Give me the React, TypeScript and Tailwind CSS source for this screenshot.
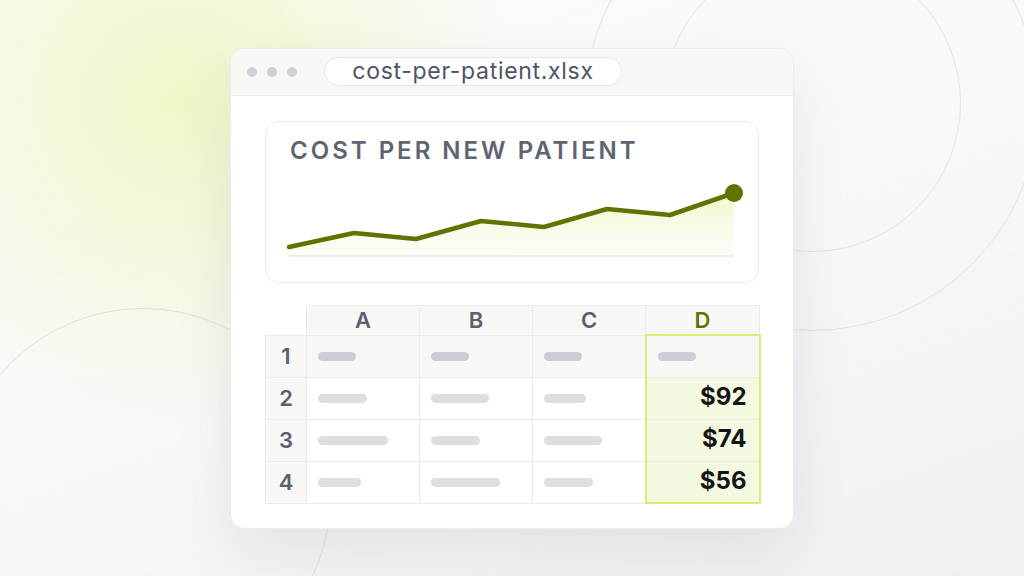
import type { ReactNode } from "react";

const rows = [
  { n: 1, bars: [38, 38, 38, 38], value: "" },
  { n: 2, bars: [49, 58, 42], value: "$92" },
  { n: 3, bars: [70, 49, 58], value: "$74" },
  { n: 4, bars: [43, 69, 49], value: "$56" },
];

const points = "9,70 74,56 136,62 201,44 264,50 327,32 390,38 454,16";

const Bar = ({ width, dark }: { width: number; dark?: boolean }) => (
  <div
    className={`h-[9px] rounded-full ${dark ? "bg-[#cbced5]" : "bg-[#dddee2]"}`}
    style={{ width }}
  />
);

const HeadCell = ({ children, active }: { children: ReactNode; active?: boolean }) => (
  <th
    className={`border border-[#ebebeb] bg-[#f7f7f6] text-center align-middle text-[22px] font-semibold leading-none ${
      active ? "text-[#5f7400]" : "text-[#5b606e]"
    }`}
  >
    {children}
  </th>
);

const Chart = () => (
  <svg width="470" height="90" viewBox="0 0 470 90" className="block">
    <defs>
      <linearGradient id="fill" x1="0" y1="0" x2="0" y2="1">
        <stop offset="0" stopColor="#eef7c4" stopOpacity="0.9" />
        <stop offset="1" stopColor="#f6fae4" stopOpacity="0.3" />
      </linearGradient>
    </defs>
    <polygon points={`9,79 ${points} 454,79`} fill="url(#fill)" />
    <line x1="9" y1="79" x2="454" y2="79" stroke="#e6e6e6" strokeWidth="1.5" />
    <polyline
      points={points}
      fill="none"
      stroke="#5f7400"
      strokeWidth="4.5"
      strokeLinejoin="round"
      strokeLinecap="round"
    />
    <circle cx="454" cy="16" r="9" fill="#5f7400" />
  </svg>
);

export default function App() {
  return (
    <div className="relative flex h-[576px] w-[1024px] items-center justify-center overflow-hidden bg-[#f7f7f8] bg-[radial-gradient(circle_at_180px_100px,#eff7c8_0px,rgba(242,248,214,0.75)_150px,rgba(250,250,250,0)_340px),linear-gradient(160deg,#fbfbfb_0%,#f8f8f9_50%,#eef0f3_100%)] font-['Inter',sans-serif]">
      <div className="absolute left-[585px] top-[-123px] h-[454px] w-[454px] rounded-full border border-[#e3e3e3]" />
      <div className="absolute left-[663px] top-[-46px] h-[298px] w-[298px] rounded-full border border-[#e3e3e3]" />
      <div className="absolute left-[-45px] top-[308px] h-[376px] w-[376px] rounded-full border border-[#e0e0dc]" />

      <div className="relative h-[481px] w-[564px] overflow-hidden rounded-[14px] border border-[#ececec] bg-white shadow-[0_24px_60px_rgba(20,20,40,0.08)]">
        <div className="flex h-[47px] items-center border-b border-[#ebebea] bg-[#f7f7f5] pl-[16px]">
          <div className="flex gap-[10px]">
            <span className="h-[10px] w-[10px] rounded-full bg-[#cfd1d7]" />
            <span className="h-[10px] w-[10px] rounded-full bg-[#cfd1d7]" />
            <span className="h-[10px] w-[10px] rounded-full bg-[#cfd1d7]" />
          </div>
          <div className="ml-[27px] flex h-[29px] w-[298px] items-center justify-center rounded-full border border-[#e6e6e6] bg-white text-[23px] leading-none tracking-[0.03em] text-[#4f5464]">
            cost-per-patient.xlsx
          </div>
        </div>

        <div className="px-[34px] pt-[25px]">
          <div className="h-[162px] rounded-[14px] border border-[#e9e9e9] bg-white pl-[14px] pt-[15px]">
            <div className="pl-[10px] text-[24px] font-semibold leading-[28px] tracking-[0.125em] text-[#5f6472]">
              COST PER NEW PATIENT
            </div>
            <div className="mt-[12px]">
              <Chart />
            </div>
          </div>

          <table className="mt-[22px] w-[494px] table-fixed border-collapse">
            <colgroup>
              <col className="w-[41px]" />
              <col className="w-[113px]" />
              <col className="w-[113px]" />
              <col className="w-[113px]" />
              <col className="w-[114px]" />
            </colgroup>
            <thead>
              <tr className="h-[30px]">
                <th className="border-none" />
                <HeadCell>A</HeadCell>
                <HeadCell>B</HeadCell>
                <HeadCell>C</HeadCell>
                <HeadCell active>D</HeadCell>
              </tr>
            </thead>
            <tbody>
              {rows.map((row, i) => {
                const first = i === 0;
                const last = i === rows.length - 1;
                return (
                  <tr key={row.n} className="h-[42px]">
                    <td className="border border-[#ebebeb] bg-[#f7f7f6] text-center align-middle text-[22px] font-semibold leading-none text-[#5b606e]">
                      {row.n}
                    </td>
                    {[0, 1, 2].map((c) => (
                      <td
                        key={c}
                        className={`border border-[#ebebeb] pl-[11px] align-middle ${first ? "bg-[#f7f7f6]" : "bg-white"}`}
                      >
                        <Bar width={row.bars[c]} dark={first} />
                      </td>
                    ))}
                    <td
                      className={`border-x-2 border-x-[#d6ee72] border-y border-y-[#ebebeb] align-middle ${
                        first ? "border-t-2 border-t-[#d6ee72] bg-[#f7f7f6] pl-[11px]" : "bg-[#f3f8e0] pr-[12px] text-right"
                      } ${last ? "border-b-2 border-b-[#d6ee72]" : ""}`}
                    >
                      {first ? (
                        <Bar width={row.bars[3]} dark />
                      ) : (
                        <span className="text-[24px] font-bold leading-none text-[#141414]">
                          {row.value}
                        </span>
                      )}
                    </td>
                  </tr>
                );
              })}
            </tbody>
          </table>
        </div>
      </div>
    </div>
  );
}
